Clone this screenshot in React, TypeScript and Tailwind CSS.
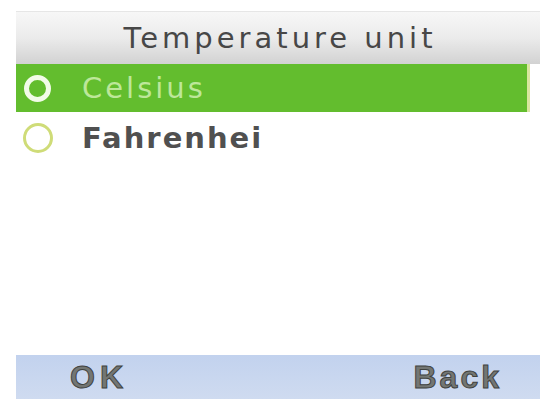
import React from "react";

export default function App() {
  return (
    <div
      className="w-[540px] h-[399px] bg-white flex flex-col pt-[11px] pl-[16px] overflow-hidden"
      style={{ fontFamily: '"DejaVu Sans", Verdana, sans-serif' }}
    >
      <div className="h-[53px] flex items-center justify-center border-t border-[#e6e6e6] bg-gradient-to-b from-[#f7f7f7] via-[#ebebeb] to-[#d2d2d2]">
        <span className="text-[29px] leading-none tracking-[4px] text-[#474747] pl-[4px]">Temperature unit</span>
      </div>
      <div className="h-[48px] mr-[10px] bg-[#63bd2e] flex items-center border-r-[3px] border-[#d9e6a0]">
        <div className="w-[27px] h-[27px] ml-[8px] rounded-full border-[5px] border-[#f2fbe8] bg-[#63bd2e]" />
        <span className="ml-[31px] text-[29px] leading-none tracking-[3px] text-[#bde79a]">Celsius</span>
      </div>
      <div className="h-[52px] flex items-center">
        <div className="w-[30px] h-[30px] ml-[7px] rounded-full border-[3px] border-[#cfdc78]" />
        <span className="ml-[29px] text-[29px] leading-none font-bold tracking-[2px] text-[#505050]">Fahrenhei</span>
      </div>
      <div className="flex-1" />
      <div
        className="h-[44px] bg-gradient-to-b from-[#c2d2ee] to-[#cfdbf0] flex items-center justify-between pl-[54px] pr-[38px]"
        style={{ fontFamily: '"Liberation Sans", Arial, sans-serif' }}
      >
        <span
          className="text-[32px] leading-none font-bold tracking-[5px] text-[#737673]"
          style={{ WebkitTextStroke: "1px #3f423f" }}
        >
          OK
        </span>
        <span
          className="text-[32px] leading-none font-bold tracking-[3px] text-[#737673]"
          style={{ WebkitTextStroke: "1px #3f423f" }}
        >
          Back
        </span>
      </div>
    </div>
  );
}
